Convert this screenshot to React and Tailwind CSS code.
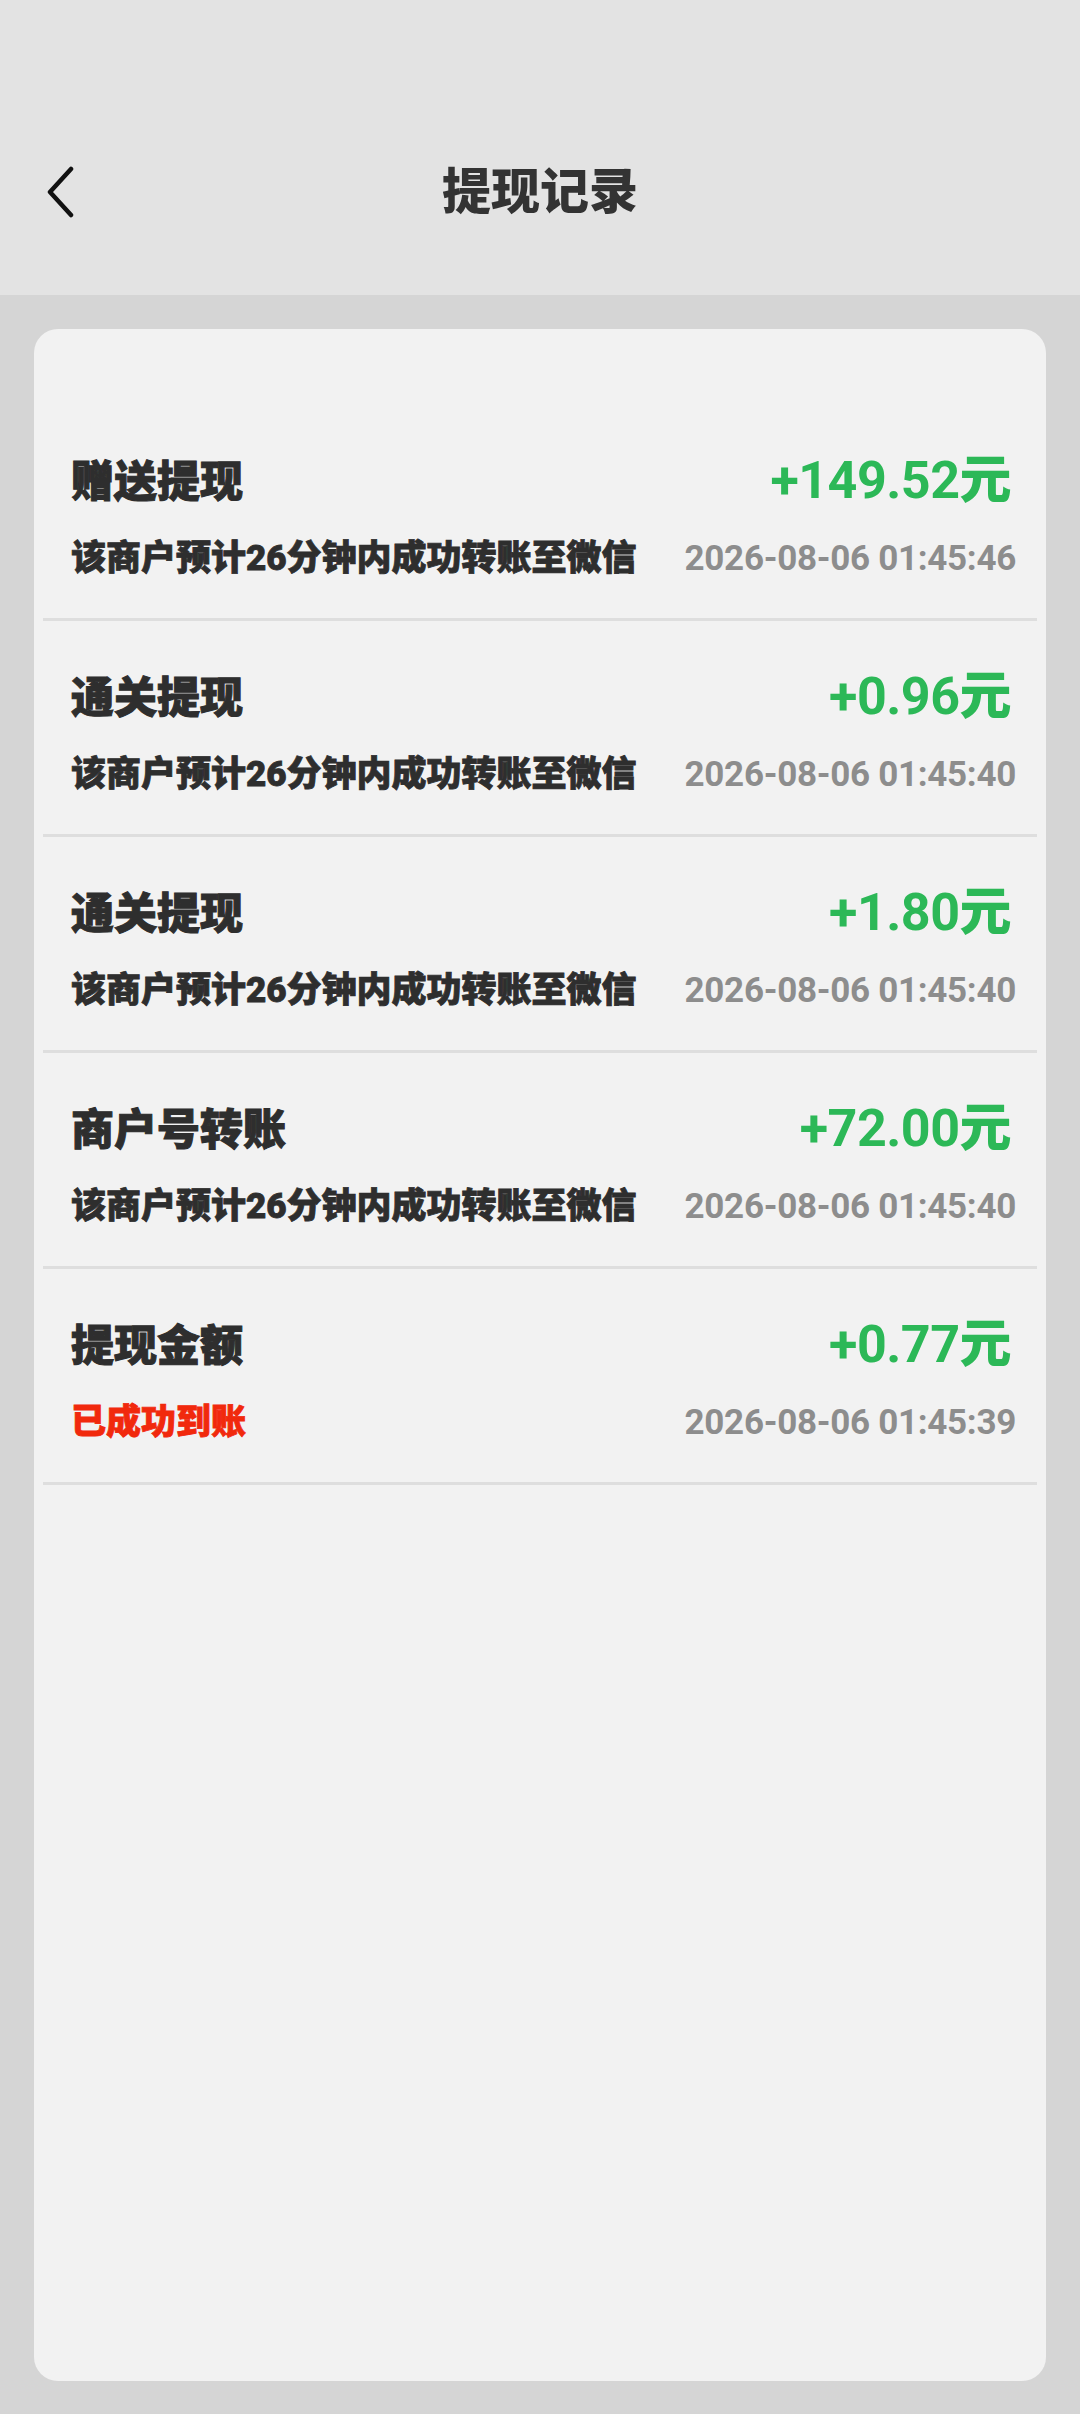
import { useState } from 'react'

const registros = [
  { titulo: '赠送提现', valor: '+149.52', status: '该商户预计26分钟内成功转账至微信', data: '2026-08-06 01:45:46', sucesso: false },
  { titulo: '通关提现', valor: '+0.96', status: '该商户预计26分钟内成功转账至微信', data: '2026-08-06 01:45:40', sucesso: false },
  { titulo: '通关提现', valor: '+1.80', status: '该商户预计26分钟内成功转账至微信', data: '2026-08-06 01:45:40', sucesso: false },
  { titulo: '商户号转账', valor: '+72.00', status: '该商户预计26分钟内成功转账至微信', data: '2026-08-06 01:45:40', sucesso: false },
  { titulo: '提现金额', valor: '+0.77', status: '已成功到账', data: '2026-08-06 01:45:39', sucesso: true },
]

const cjk = "font-['Noto_Sans_CJK_SC',sans-serif]"
const num = "font-['Roboto','Noto_Sans_CJK_SC',sans-serif]"

function Linha({ item }) {
  return (
    <div className="h-[216px] border-b-[3px] border-[#dedede] pt-[49px] pl-[28px] pr-[21px]">
      <div className="h-[48px] flex items-center justify-between">
        <span className={`${cjk} text-[43px] font-black text-[#2e2e2e] leading-none [-webkit-text-stroke:1px_#2e2e2e]`}>
          {item.titulo}
        </span>
        <span className={`${num} text-[52px] font-bold text-[#2cb857] leading-none mr-[5px] tracking-[-0.5px]`}>
          {item.valor}
          <span className={`${cjk} font-black`}>元</span>
        </span>
      </div>
      <div className="mt-[36px] h-[40px] flex items-center justify-between">
        <span
          className={`${num} text-[35px] font-black leading-none ${
            item.sucesso ? 'text-[#f1290d] [-webkit-text-stroke:0.8px_#f1290d]' : 'text-[#2e2e2e] [-webkit-text-stroke:0.8px_#2e2e2e]'
          }`}
        >
          {item.status}
        </span>
        <span className={`${num} text-[35px] font-bold text-[#8d8d8d] leading-none tracking-[-0.3px]`}>{item.data}</span>
      </div>
    </div>
  )
}

export default function App() {
  const [voltou, setVoltou] = useState(false)

  return (
    <div className="w-[1080px] h-[2414px] bg-[#d5d5d5] flex flex-col overflow-hidden">
      <div className="h-[295px] shrink-0 bg-[#e3e3e3] relative flex items-end justify-center pb-[83px]">
        <button
          onClick={() => setVoltou(!voltou)}
          className="absolute left-[40px] top-[164px] w-[40px] h-[56px] flex items-center justify-center"
        >
          <svg width="30" height="52" viewBox="0 0 30 52" fill="none">
            <path d="M26 3 L5 26 L26 49" stroke="#111" strokeWidth="4.5" strokeLinecap="round" strokeLinejoin="round" />
          </svg>
        </button>
        <h1 className={`${cjk} text-[49px] font-black text-[#333] leading-none`}>提现记录</h1>
      </div>

      <div className="flex-1 px-[34px] pt-[34px] pb-[33px]">
        <div className="h-full bg-[#f2f2f2] rounded-[24px] px-[9px] pt-[76px]">
          {registros.map((item, i) => (
            <Linha key={i} item={item} />
          ))}
        </div>
      </div>
    </div>
  )
}
